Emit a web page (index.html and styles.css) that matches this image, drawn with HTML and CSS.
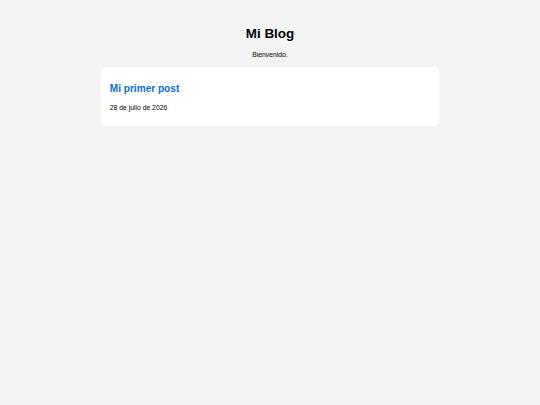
FILE: index.html
```html
<!DOCTYPE html>
<html lang="es">
<head>
<meta charset="utf-8">
<title>Mi Blog</title>
<link rel="stylesheet" href="styles.css">
</head>
<body>
<header class="site-header">
  <h1 class="site-title">Mi Blog</h1>
  <p class="site-tagline">Bienvenido.</p>
</header>
<main class="posts">
  <article class="post-card">
    <h2 class="post-title"><a href="#">Mi primer post</a></h2>
    <p class="post-date">28 de julio de 2026</p>
  </article>
</main>
</body>
</html>
```
FILE: styles.css
```css
html, body {
  margin: 0;
  padding: 0;
}
body {
  background: #f4f4f4;
  font-family: "Liberation Sans", Arial, sans-serif;
  color: #000;
  font-size: 6.72px;
}
.site-header {
  text-align: center;
  padding-top: 25.8px;
}
.site-title {
  margin: 0;
  font-size: 13.44px;
  font-weight: bold;
  line-height: 15.4px;
}
.site-tagline {
  margin: 9.4px 0 0;
  font-size: 6.8px;
  line-height: 7.72px;
  color: #000;
}
.posts {
  max-width: 338px;
  margin: 8.4px auto 0;
}
.post-card {
  background: #fff;
  border-radius: 5px;
  padding: 8px 8.8px 7.8px;
}
.post-title {
  margin: 8.6px 0 9.3px;
  font-size: 10.08px;
  font-weight: bold;
  line-height: 11.6px;
}
.post-title a {
  color: #0b6fc6;
  text-decoration: none;
}
.post-date {
  margin: 0 0 6.72px;
  font-size: 6.8px;
  line-height: 7.72px;
  color: #000;
}
```
